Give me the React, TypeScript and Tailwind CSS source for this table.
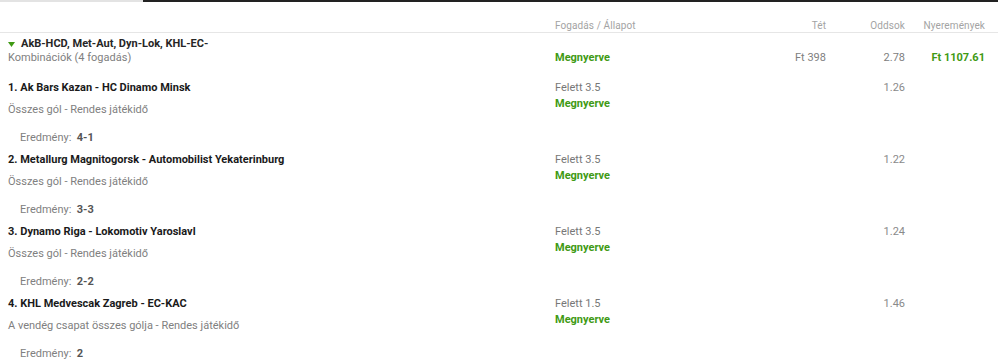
import React from 'react';

type Selection = {
  title: string;
  market: string;
  pick: string;
  odds: string;
  result: string;
};

const selections: Selection[] = [
  { title: '1. Ak Bars Kazan - HC Dinamo Minsk', market: 'Összes gól - Rendes játékidő', pick: 'Felett 3.5', odds: '1.26', result: '4-1' },
  { title: '2. Metallurg Magnitogorsk - Automobilist Yekaterinburg', market: 'Összes gól - Rendes játékidő', pick: 'Felett 3.5', odds: '1.22', result: '3-3' },
  { title: '3. Dynamo Riga - Lokomotiv Yaroslavl', market: 'Összes gól - Rendes játékidő', pick: 'Felett 3.5', odds: '1.24', result: '2-2' },
  { title: '4. KHL Medvescak Zagreb - EC-KAC', market: 'A vendég csapat összes gólja - Rendes játékidő', pick: 'Felett 1.5', odds: '1.46', result: '2' },
];

const cols = 'grid grid-cols-[547px_200px_71px_79px_80px] pl-2 pr-[13px]';

const App: React.FC = () => {
  return (
    <div className="w-[998px] h-[360px] bg-white overflow-hidden font-['Roboto',sans-serif] text-[11px] leading-[14px]">
      {/* Top tabs line */}
      <div className="flex h-[2px]">
        <div className="w-[143px] bg-[#e3e3e3]"></div>
        <div className="flex-1 bg-[#222]"></div>
      </div>

      {/* Column headers */}
      <div className={`${cols} h-[31px] items-end text-[10px] tracking-[0.1px] leading-[12px] border-b border-[#e6e6e6] text-[#a3a3a3]`}>
        <div></div>
        <div>Fogadás / Állapot</div>
        <div className="text-right">Tét</div>
        <div className="text-right">Oddsok</div>
        <div className="text-right">Nyeremények</div>
      </div>

      {/* Bet summary */}
      <div className={`${cols} pt-1`}>
        <div>
          <div className="flex items-center gap-[6px] font-bold text-[#262626]">
            <svg width="7" height="5" viewBox="0 0 7 5">
              <polygon points="0,0 7,0 3.5,5" fill="#3f9a14" />
            </svg>
            <span>AkB-HCD, Met-Aut, Dyn-Lok, KHL-EC-</span>
          </div>
          <div className="text-[#808080]">Kombinációk (4 fogadás)</div>
        </div>
        <div className="pt-[14px] font-bold text-[#3f9a14]">Megnyerve</div>
        <div className="pt-[14px] text-right text-[#808080]">Ft 398</div>
        <div className="pt-[14px] text-right text-[#808080]">2.78</div>
        <div className="pt-[14px] text-right font-bold text-[#3f9a14]">Ft 1107.61</div>
      </div>

      {/* Selections */}
      <div className="pt-4">
        {selections.map((s) => (
          <div key={s.title} className={`${cols} h-[72px]`}>
            <div>
              <div className="font-bold text-[#1a1a1a]">{s.title}</div>
              <div className="mt-2 text-[#808080]">{s.market}</div>
              <div className="mt-[14px] pl-3 text-[#808080]">
                Eredmény:&nbsp; <span className="font-bold text-[#555]">{s.result}</span>
              </div>
            </div>
            <div>
              <div className="text-[#777]">{s.pick}</div>
              <div className="mt-[2px] font-bold text-[#3f9a14]">Megnyerve</div>
            </div>
            <div></div>
            <div className="text-right text-[#8a8a8a]">{s.odds}</div>
            <div></div>
          </div>
        ))}
      </div>
    </div>
  );
};

export default App;
